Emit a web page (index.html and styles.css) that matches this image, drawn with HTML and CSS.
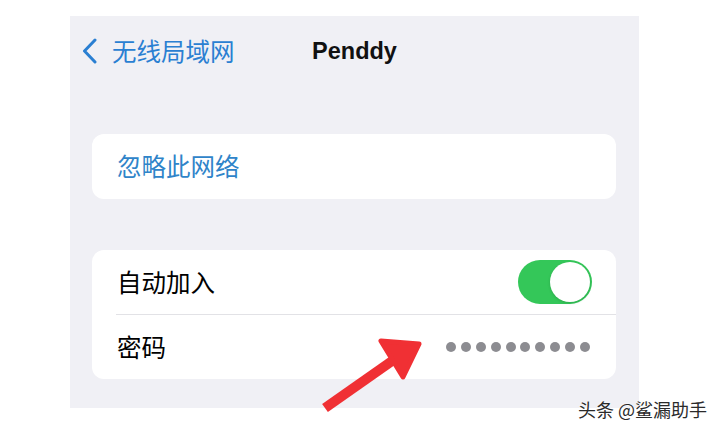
FILE: index.html
```html
<!DOCTYPE html>
<html lang="zh-CN">
<head>
  <meta charset="UTF-8">
  <meta name="viewport" content="width=device-width, initial-scale=1.0">
  <title>Penddy</title>
  <link rel="stylesheet" href="styles.css">
</head>
<body>
  <div class="screen">
    <div class="nav">
      <a class="back">
        <svg class="chevron" width="16" height="26" viewBox="0 0 16 26">
          <path d="M13 2 L2.5 13 L13 24" fill="none" stroke="currentColor" stroke-width="3" stroke-linecap="round" stroke-linejoin="round"/>
        </svg>
        <span>无线局域网</span>
      </a>
      <div class="title">Penddy</div>
      <div></div>
    </div>

    <div class="groups">
      <div class="card">
        <div class="row">
          <span class="link">忽略此网络</span>
        </div>
      </div>

      <div class="card card-second">
        <div class="row">
          <span>自动加入</span>
          <span class="toggle on"><span class="knob"></span></span>
        </div>
        <div class="row">
          <span>密码</span>
          <span class="dots">
            <i></i><i></i><i></i><i></i><i></i><i></i><i></i><i></i><i></i><i></i>
          </span>
        </div>
      </div>
    </div>
  </div>

  <!-- annotation arrow drawn over the screenshot -->
  <svg class="arrow" width="140" height="100" viewBox="0 0 140 100">
    <line x1="25" y1="88" x2="92" y2="41" stroke="#f03034" stroke-width="10"/>
    <polygon points="81,21 119,24 103,57" fill="#f03034" stroke="#f03034" stroke-width="5" stroke-linejoin="round"/>
  </svg>

  <div class="watermark">头条 @鲨漏助手</div>
</body>
</html>
```

FILE: styles.css
```css
body {
  margin: 0;
  width: 720px;
  height: 433px;
  position: relative;
  overflow: hidden;
  background: #fff;
  font-family: "Noto Sans CJK SC", "Noto Sans", sans-serif;
  color: #000;
}

.screen {
  margin: 16px 0 0 70px;
  width: 569px;
  height: 392px;
  background: #f0f0f5;
  display: flex;
  flex-direction: column;
}

.nav {
  height: 70px;
  padding: 0 12px;
  display: grid;
  grid-template-columns: 1fr auto 1fr;
  align-items: center;
}

.back {
  display: flex;
  align-items: center;
  gap: 14px;
  color: #2a7fd2;
  font-size: 24.5px;
  line-height: 1;
}

.chevron {
  display: block;
}

.title {
  font-family: "Liberation Sans", Arial, sans-serif;
  font-weight: bold;
  font-size: 23.5px;
  color: #111;
}

.groups {
  padding: 0 23px 0 22px;
}

.card {
  margin-top: 48px;
  background: #fff;
  border-radius: 12px;
}

.card-second {
  margin-top: 51px;
}

.row {
  height: 64px;
  margin-left: 24px;
  padding: 0 24px 0 1px;
  display: flex;
  align-items: center;
  justify-content: space-between;
  font-size: 24.5px;
  line-height: 1;
}

.card:first-child .row {
  height: 65px;
}

.row + .row {
  border-top: 1px solid #e2e2e6;
}

.link {
  color: #2f84c9;
}

.toggle {
  width: 74px;
  height: 44px;
  border-radius: 22px;
  background: #e5e5ea;
  display: flex;
  align-items: center;
  padding: 2px;
  box-sizing: border-box;
}

.toggle.on {
  background: #34c759;
  justify-content: flex-end;
}

.knob {
  width: 40px;
  height: 40px;
  border-radius: 50%;
  background: #fff;
  box-shadow: 0 1px 3px rgba(0, 0, 0, 0.15);
}

.dots {
  display: flex;
  gap: 4.9px;
  margin-right: 2px;
}

.dots i {
  width: 10px;
  height: 10px;
  border-radius: 50%;
  background: #8c8c91;
}

.arrow {
  position: absolute;
  left: 300px;
  top: 320px;
}

.watermark {
  position: absolute;
  right: 13px;
  top: 397px;
  font-size: 18px;
  line-height: 24px;
  color: #2a2a2a;
  text-shadow: 0 0 2px #fff, 0 0 1px #fff;
}
```
